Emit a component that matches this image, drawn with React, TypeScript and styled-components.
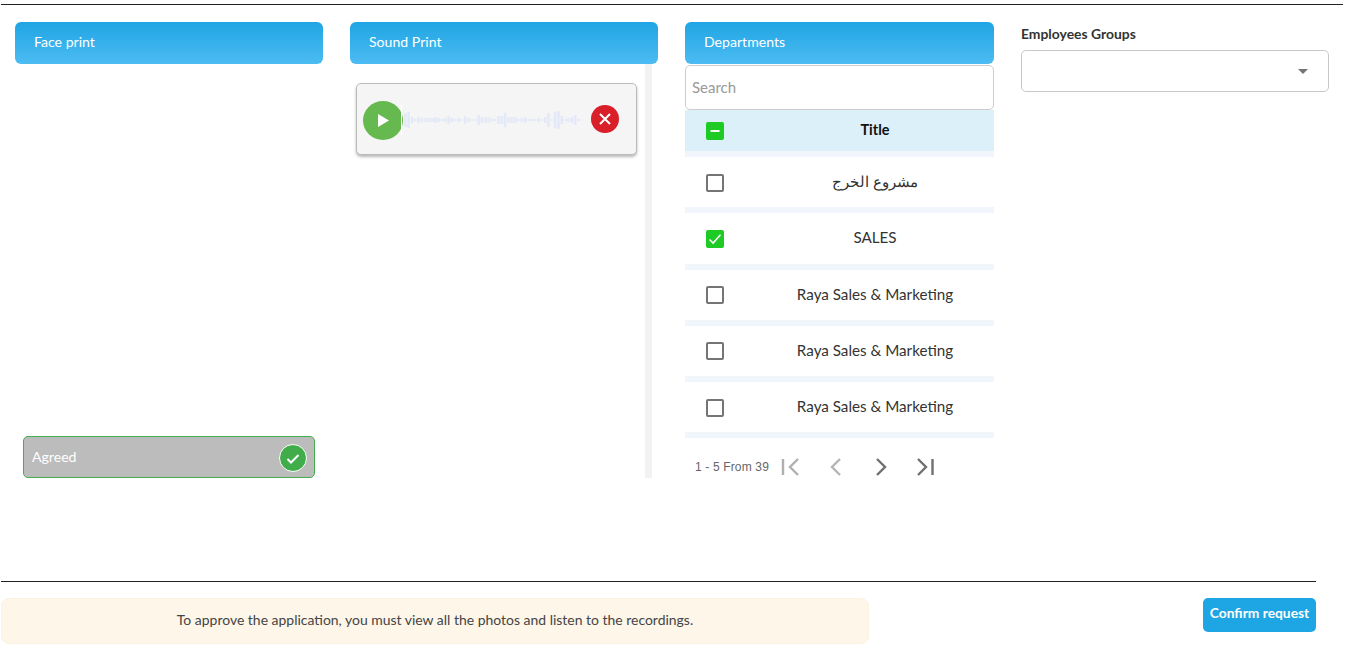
import React from "react";
import styled, { createGlobalStyle } from "styled-components";

const Global = createGlobalStyle`
  html, body { margin: 0; padding: 0; background: #fff; }
  body { font-family: "Lato", "Noto Sans", sans-serif; color: #333; overflow: hidden; }
  * { box-sizing: border-box; }
`;
const Page = styled.div`
  width: 1352px; height: 667px; padding: 4px 0 0 1px; display: flex; flex-direction: column;
`;
const TopRule = styled.div`width: 1342px; height: 1px; background: #222;`;
const Columns = styled.div`
  display: grid; grid-template-columns: 308px 308px 309px 308px; column-gap: 27px;
  padding: 17px 0 0 14px; height: 473px; align-items: start;
`;
const Column = styled.section`display: flex; flex-direction: column; min-height: 456px;`;
const Header = styled.div`
  height: 42px; flex: none; border-radius: 6px; padding: 0 19px 4px; display: flex; align-items: center;
  background: linear-gradient(180deg, #1fa5e3 0%, #4dbcf3 100%);
  color: #fff; font-size: 14.1px;
`;
const FaceBody = styled.div`flex: 1; display: flex; flex-direction: column; justify-content: flex-end; padding: 0 8px;`;
const Agreed = styled.div`
  height: 42px; border: 1px solid #43ae4c; border-radius: 5px; background: #bcbcbc; color: #fff;
  font-size: 14.1px; display: flex; align-items: center; justify-content: space-between; padding: 0 7px 0 8px;
`;
const AgreedText = styled.span`margin-top: -2px;`;
const CheckDisc = styled.span`
  width: 28px; height: 28px; margin-top: 1px; border-radius: 50%; background: #41ad4a; border: 1px solid #fff;
  display: flex; align-items: center; justify-content: center;
`;
const SoundBody = styled.div`flex: 1; display: flex; justify-content: space-between; padding: 19px 6px 0 6px;`;
const AudioCard = styled.div`
  width: 281px; height: 72px; border: 1px solid #bbb; border-radius: 5px; background: #f5f5f5;
  box-shadow: 0 2px 3px rgba(0,0,0,.28); display: flex; align-items: center; padding: 0 17px 0 6px;
`;
const PlayBtn = styled.span`
  width: 40px; height: 39px; margin-top: 2px; border-radius: 50%; background: #66b94f; flex: none;
  display: flex; align-items: center; justify-content: center;
`;
const Wave = styled.svg`flex: none; width: 183px; height: 30px; margin: 1px 7px 0 -2px;`;
const CloseBtn = styled.span`
  width: 28px; height: 28px; border-radius: 50%; background: #d81f2a; flex: none;
  display: flex; align-items: center; justify-content: center;
`;
const ScrollTrack = styled.div`width: 7px; margin-top: -19px; background: #f1f2f3;`;
const SearchBox = styled.div`
  height: 45px; flex: none; margin-top: 1px; border: 1px solid #cdcdcd; border-radius: 5px; background: #fff;
  display: flex; align-items: center; padding: 0 6px 1px; color: #999; font-size: 15px;
`;
const HeadRow = styled.div`
  height: 41px; flex: none; background: #dcf0fa; display: grid; grid-template-columns: 60px 1fr; align-items: center;
  font-weight: 700; color: #111; font-size: 14.5px;
`;
const Band = styled.div`height: 6px; flex: none; background: #f1f5fc;`;
const Row = styled.div`
  height: 50.25px; flex: none; display: grid; grid-template-columns: 60px 1fr; align-items: center; font-size: 15.2px; color: #333;
`;
const BoxCell = styled.div`display: flex; justify-content: center; padding-top: 1px;`;
const TitleCell = styled.div`text-align: center; padding: 0 0 2px 11px;`;
const Box = styled.span<{ $on?: boolean }>`
  width: 18px; height: 18px; border-radius: 2px; display: flex; align-items: center; justify-content: center;
  background: ${(p) => (p.$on ? "#1ecb24" : "#fff")};
  border: ${(p) => (p.$on ? "none" : "2px solid #757575")};
`;
const Pager = styled.div`
  display: flex; align-items: center; padding: 8px 0 0 10px; height: 50px; flex: none;
  font-family: "Liberation Sans", sans-serif; font-size: 12px; letter-spacing: .15px; color: #666;
`;
const PagerLabel = styled.span`width: 84px; flex: none;`;
const PagerIcon = styled.svg`width: 24px; height: 24px; margin-right: 21px; flex: none;`;
const FieldLabel = styled.label`font-size: 13.9px; color: #222; font-weight: 700; line-height: 24px; height: 28px; display: block; opacity: .92;`;
const Select = styled.div`
  height: 42px; border: 1px solid #c8c8c8; border-radius: 5px; display: flex; align-items: center; justify-content: flex-end; padding: 0 20px 0 0;
`;
const Caret = styled.span`
  width: 0; height: 0; border-left: 5px solid transparent; border-right: 5px solid transparent; border-top: 5px solid #757575;
`;
const BottomRule = styled.div`width: 1315px; height: 1px; margin-top: 103px; background: #222;`;
const Footer = styled.div`display: flex; justify-content: space-between; width: 1315px; padding-top: 16px; align-items: flex-start;`;
const Notice = styled.div`
  width: 868px; height: 46px; border: 1px solid #fbf2df; border-radius: 8px; background: #fdf6e9; color: #444;
  display: flex; align-items: center; justify-content: center; font-size: 13.96px; padding-bottom: 4px;
`;
const Confirm = styled.button`
  width: 113px; height: 34px; border: none; border-radius: 5px; background: #1ea5e3; color: #fff;
  font-family: inherit; font-size: 13.8px; font-weight: 700; padding: 0 0 5px;
`;

const bars = [14,16,6,2,6,4,4,4,4,6,4,2,4,8,4,2,4,2,8,4,2,2,10,6,5,5,3,2,8,8,14,6,6,6,2,4,6,2,2,2,4,2,6,14,2,16,18,8,2,4,6,10,2];
const rows = ["مشروع الخرج", "SALES", "Raya Sales & Marketing", "Raya Sales & Marketing", "Raya Sales & Marketing"];

const Tick = () => (
  <svg width="14" height="14" viewBox="0 0 14 14"><path d="M1.5 7.5l3.6 3.6L12.5 2.8" fill="none" stroke="#fff" strokeWidth="1.5" /></svg>
);

export default function App() {
  return (
    <Page>
      <Global />
      <TopRule />
      <Columns>
        <Column>
          <Header>Face print</Header>
          <FaceBody>
            <Agreed>
              <AgreedText>Agreed</AgreedText>
              <CheckDisc>
                <svg width="16" height="16" viewBox="0 0 16 16"><path d="M2.5 9l3.5 3.5 7.5-7.5" fill="none" stroke="#fff" strokeWidth="2" /></svg>
              </CheckDisc>
            </Agreed>
          </FaceBody>
        </Column>
        <Column>
          <Header>Sound Print</Header>
          <SoundBody>
            <AudioCard>
              <PlayBtn>
                <svg width="11" height="13" viewBox="0 0 11 13"><path d="M0 0L11 6.5 0 13z" fill="#fff" /></svg>
              </PlayBtn>
              <Wave viewBox="0 0 183 30">
                <rect x="0" y="0" width="1" height="30" fill="#fff" />
                {bars.map((h, i) => (
                  <rect key={i} x={i * 3.33 + 3} y={15 - h / 2} width="2.6" height={h} fill="#e3e9f7" />
                ))}
              </Wave>
              <CloseBtn>
                <svg width="14" height="14" viewBox="0 0 14 14"><path d="M2 2l10 10M12 2L2 12" stroke="#fff" strokeWidth="2" /></svg>
              </CloseBtn>
            </AudioCard>
            <ScrollTrack />
          </SoundBody>
        </Column>
        <Column>
          <Header>Departments</Header>
          <SearchBox>Search</SearchBox>
          <HeadRow>
            <BoxCell>
              <Box $on>
                <svg width="12" height="12" viewBox="0 0 12 12"><path d="M1.5 6h9" stroke="#fff" strokeWidth="2" /></svg>
              </Box>
            </BoxCell>
            <TitleCell>Title</TitleCell>
          </HeadRow>
          <Band />
          {rows.map((t, i) => (
            <React.Fragment key={i}>
              <Row>
                <BoxCell>
                  <Box $on={t === "SALES"}>{t === "SALES" && <Tick />}</Box>
                </BoxCell>
                <TitleCell>{t}</TitleCell>
              </Row>
              <Band />
            </React.Fragment>
          ))}
          <Pager>
            <PagerLabel>1 - 5 From 39</PagerLabel>
            <PagerIcon viewBox="0 0 24 24"><path d="M4 4v16M19 4l-8 8 8 8" fill="none" stroke="#b0b0b0" strokeWidth="2.4" /></PagerIcon>
            <PagerIcon viewBox="0 0 24 24"><path d="M16 4l-8 8 8 8" fill="none" stroke="#b5b5b5" strokeWidth="2.4" /></PagerIcon>
            <PagerIcon viewBox="0 0 24 24"><path d="M8 4l8 8-8 8" fill="none" stroke="#707070" strokeWidth="2.4" /></PagerIcon>
            <PagerIcon viewBox="0 0 24 24"><path d="M4 4l8 8-8 8M18.5 4v16" fill="none" stroke="#707070" strokeWidth="2.4" /></PagerIcon>
          </Pager>
        </Column>
        <Column>
          <FieldLabel>Employees Groups</FieldLabel>
          <Select><Caret /></Select>
        </Column>
      </Columns>
      <BottomRule />
      <Footer>
        <Notice>To approve the application, you must view all the photos and listen to the recordings.</Notice>
        <Confirm>Confirm request</Confirm>
      </Footer>
    </Page>
  );
}
